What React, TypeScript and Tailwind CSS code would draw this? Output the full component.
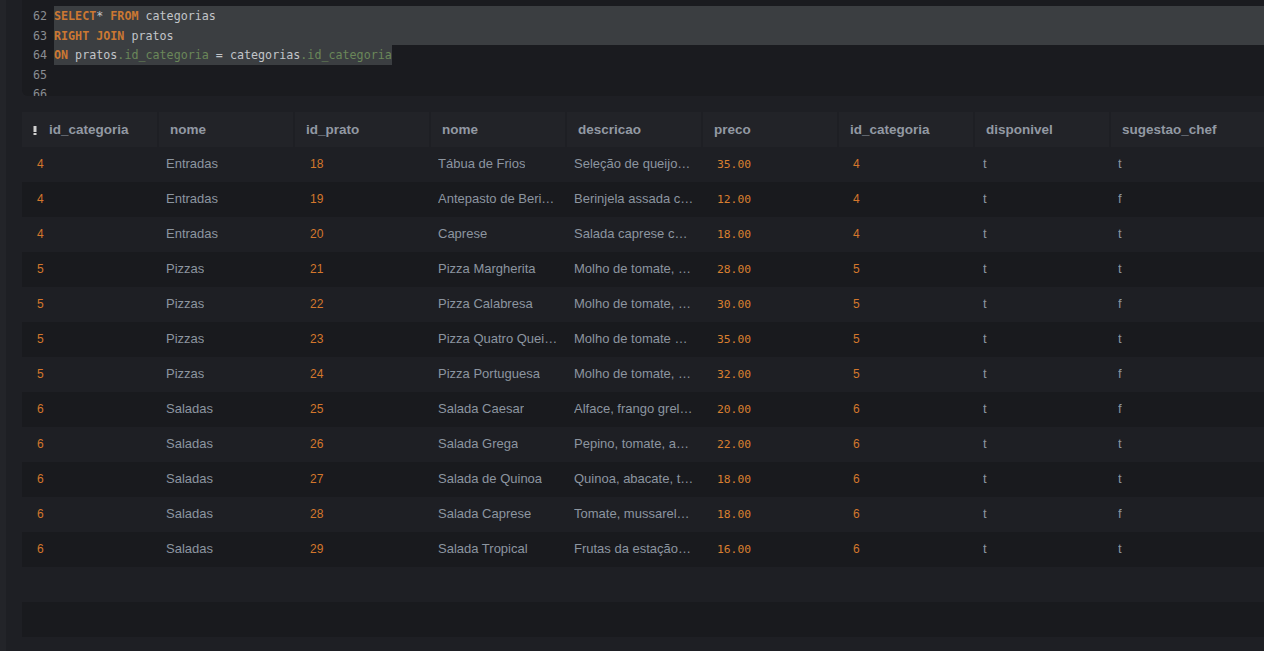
import React from 'react';

const mono = 'font-["DejaVu_Sans_Mono","Liberation_Mono",monospace]';

type Row = {
  idCat: number;
  cat: string;
  idPrato: number;
  nome: string;
  desc: string;
  preco: string;
  disp: string;
  chef: string;
};

const rows: Row[] = [
  { idCat: 4, cat: 'Entradas', idPrato: 18, nome: 'Tábua de Frios', desc: 'Seleção de queijos e frios', preco: '35.00', disp: 't', chef: 't' },
  { idCat: 4, cat: 'Entradas', idPrato: 19, nome: 'Antepasto de Berinjela', desc: 'Berinjela assada com azeite', preco: '12.00', disp: 't', chef: 'f' },
  { idCat: 4, cat: 'Entradas', idPrato: 20, nome: 'Caprese', desc: 'Salada caprese com manjericão', preco: '18.00', disp: 't', chef: 't' },
  { idCat: 5, cat: 'Pizzas', idPrato: 21, nome: 'Pizza Margherita', desc: 'Molho de tomate, mussarela e manjericão', preco: '28.00', disp: 't', chef: 't' },
  { idCat: 5, cat: 'Pizzas', idPrato: 22, nome: 'Pizza Calabresa', desc: 'Molho de tomate, mussarela e calabresa', preco: '30.00', disp: 't', chef: 'f' },
  { idCat: 5, cat: 'Pizzas', idPrato: 23, nome: 'Pizza Quatro Queijos', desc: 'Molho de tomate mussarela e quatro queijos', preco: '35.00', disp: 't', chef: 't' },
  { idCat: 5, cat: 'Pizzas', idPrato: 24, nome: 'Pizza Portuguesa', desc: 'Molho de tomate, presunto e ovos', preco: '32.00', disp: 't', chef: 'f' },
  { idCat: 6, cat: 'Saladas', idPrato: 25, nome: 'Salada Caesar', desc: 'Alface, frango grelhado e croutons', preco: '20.00', disp: 't', chef: 'f' },
  { idCat: 6, cat: 'Saladas', idPrato: 26, nome: 'Salada Grega', desc: 'Pepino, tomate, azeitona e feta', preco: '22.00', disp: 't', chef: 't' },
  { idCat: 6, cat: 'Saladas', idPrato: 27, nome: 'Salada de Quinoa', desc: 'Quinoa, abacate, tomate e limão', preco: '18.00', disp: 't', chef: 't' },
  { idCat: 6, cat: 'Saladas', idPrato: 28, nome: 'Salada Caprese', desc: 'Tomate, mussarela de búfala', preco: '18.00', disp: 't', chef: 'f' },
  { idCat: 6, cat: 'Saladas', idPrato: 29, nome: 'Salada Tropical', desc: 'Frutas da estação com folhas', preco: '16.00', disp: 't', chef: 't' },
];

const headers = ['nome', 'id_prato', 'nome', 'descricao', 'preco', 'id_categoria', 'disponivel', 'sugestao_chef'];

const grid = 'grid grid-cols-[135px_repeat(7,134px)_200px] gap-x-[2px]';

const Kw = ({ children }: { children: React.ReactNode }) => (
  <span className="text-[#cc7832] font-bold">{children}</span>
);
const Fld = ({ children }: { children: React.ReactNode }) => (
  <span className="text-[#6a8759]">{children}</span>
);

const Editor = () => (
  <div className={`h-[96px] bg-[#1a1b1f] rounded-bl-md overflow-hidden pt-[6px] ${mono} text-[11.7px] leading-[19.5px] text-[#c2c5c9]`}>
    {[62, 63, 64, 65, 66].map((n) => (
      <div key={n} className="flex h-[19.5px] pt-[1px]">
        <div className="w-[32px] shrink-0 pr-[7px] text-right text-[#8a8d92]">{n}</div>
        {n === 62 && (
          <div className="flex-1 -mt-[1px] pt-[1px] bg-[#3b3e41] whitespace-pre">
            <Kw>SELECT</Kw>* <Kw>FROM</Kw> categorias
          </div>
        )}
        {n === 63 && (
          <div className="flex-1 -mt-[1px] pt-[1px] bg-[#3b3e41] whitespace-pre">
            <Kw>RIGHT</Kw> <Kw>JOIN</Kw> pratos
          </div>
        )}
        {n === 64 && (
          <div className="-mt-[1px] pt-[1px] bg-[#3b3e41] whitespace-pre">
            <Kw>ON</Kw> pratos<Fld>.id_categoria</Fld> = categorias<Fld>.id_categoria</Fld>
          </div>
        )}
      </div>
    ))}
  </div>
);

const GripIcon = () => (
  <svg width="4" height="9" viewBox="0 0 4 9" className="shrink-0">
    <rect x="0.5" y="0" width="3" height="6" fill="#cfcfcf" />
    <rect x="0.5" y="7" width="3" height="2" fill="#cfcfcf" />
  </svg>
);

const Header = () => (
  <div className={`${grid} h-[35px] font-["Liberation_Sans",Arial,sans-serif] text-[13.5px] font-bold text-[#9299a3]`}>
    <div className="bg-[#222328] flex items-center pl-[11px] gap-[12px] pt-[1px]">
      <GripIcon />
      <span>id_categoria</span>
    </div>
    {headers.map((h, i) => (
      <div key={i} className="bg-[#222328] flex items-center pl-[11px] pt-[1px]">
        {h}
      </div>
    ))}
  </div>
);

const Num = ({ v, pad }: { v: number; pad: string }) => (
  <div className={`flex items-center pb-[2px] ${pad} text-[12px] text-[#d4772c]`}>{v}</div>
);

const Txt = ({ v, pad = 'px-[7px]' }: { v: string; pad?: string }) => (
  <div className={`flex items-center min-w-0 pb-[2px] ${pad}`}>
    <span className="truncate">{v}</span>
  </div>
);

const DataRow = ({ r, dark }: { r: Row; dark: boolean }) => (
  <div className={`${grid} h-[35px] ${dark ? 'bg-[#191a1e]' : 'bg-[#1e1f24]'} font-["Liberation_Sans",Arial,sans-serif] text-[13px] leading-[16px] text-[#8c95a0]`}>
    <Num v={r.idCat} pad="pl-[15px]" />
    <Txt v={r.cat} />
    <Num v={r.idPrato} pad="pl-[15px]" />
    <Txt v={r.nome} />
    <Txt v={r.desc} pad="pl-[7px] pr-[7px]" />
    <div className={`flex items-center pl-[14px] pt-[1px] ${mono} text-[11.3px] leading-[16px] text-[#d97f30]`}>{r.preco}</div>
    <Num v={r.idCat} pad="pl-[14px]" />
    <Txt v={r.disp} pad="pl-[8px]" />
    <Txt v={r.chef} />
  </div>
);

export default function App() {
  return (
    <div className="w-[1264px] h-[651px] overflow-hidden bg-[#1e1f24] flex">
      <div className="w-[6px] shrink-0 bg-[#232429]" />
      <div className="flex-1 min-w-0 pl-[16px] flex flex-col">
        <Editor />
        <div className="h-[16px] shrink-0" />
        <div className="overflow-hidden">
          <Header />
          {rows.map((r, i) => (
            <DataRow key={i} r={r} dark={i % 2 === 1} />
          ))}
          <div className="h-[35px] bg-[#1e1f24]" />
          <div className="h-[35px] bg-[#191a1e]" />
        </div>
      </div>
    </div>
  );
}
